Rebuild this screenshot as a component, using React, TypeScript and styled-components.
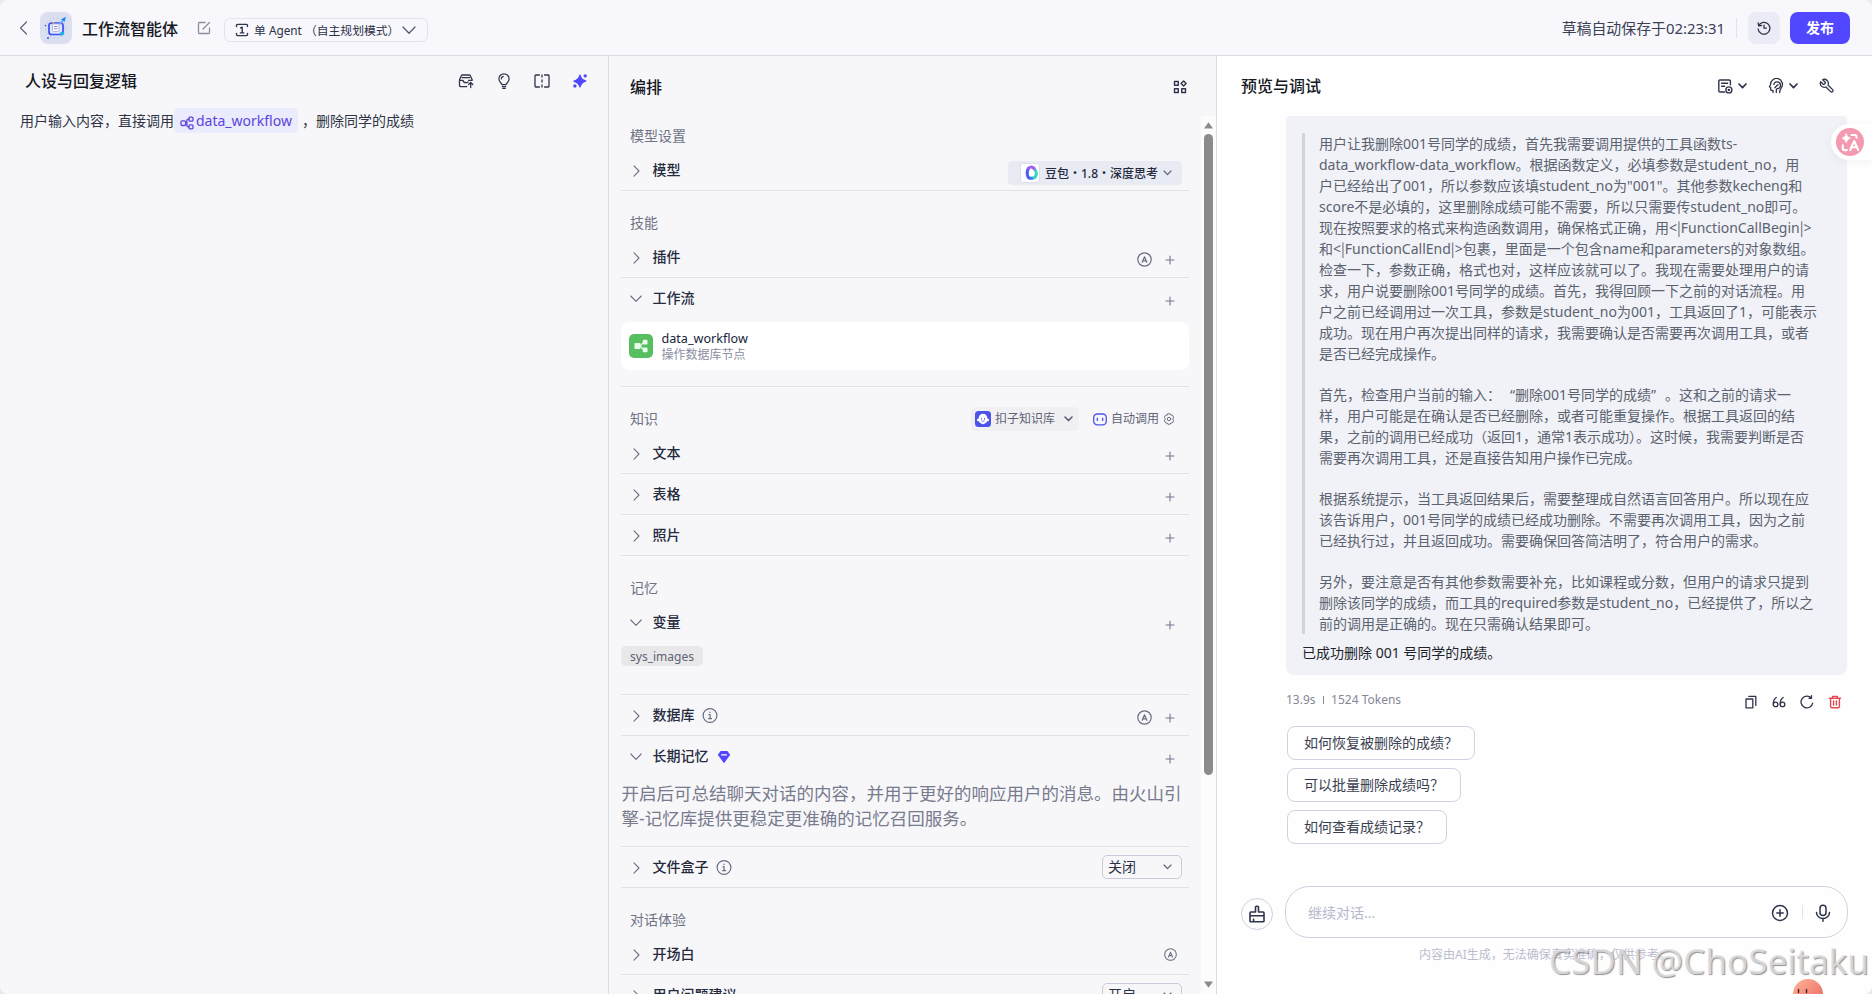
import React from "react";
import styled, { createGlobalStyle } from "styled-components";

const GlobalStyle = createGlobalStyle`
  *, *::before, *::after { box-sizing: border-box; }
  html, body { margin: 0; padding: 0; background: #e9e9ec; }
  body {
    font-family: "Noto Sans", "Noto Sans CJK SC", sans-serif;
    font-size: 14px;
    color: #2c3146;
    overflow: hidden;
  }
`;

const Page = styled.div`
  position: relative;
  width: 1872px;
  height: 994px;
  display: flex;
  flex-direction: column;
  overflow: hidden;
  background: #f7f7fa;
  border-radius: 8px;
`;

/* ---------- header ---------- */

const Header = styled.header`
  flex: none;
  height: 56px;
  padding: 0 22px 9px 17px;
  display: flex;
  align-items: flex-end;
  background: #f7f7fc;
  border-bottom: 1px solid #dcdce2;
`;

const HeaderItem = styled.div<{ $ml?: number }>`
  height: 36px;
  margin-left: ${(p) => p.$ml ?? 0}px;
  display: flex;
  align-items: center;
`;

const Avatar = styled.div`
  width: 32px;
  height: 32px;
  margin: 0 0 2px 9px;
  border-radius: 8px;
  background: #dae0ef;
  overflow: hidden;
`;

const AgentName = styled.h1`
  margin: 0 0 0 10px;
  font-size: 16px;
  line-height: 34px;
  font-weight: 500;
  color: #16181f;
`;

const ModePill = styled.div`
  width: 204px;
  height: 24px;
  margin: 0 0 4px 13px;
  padding: 0 11px 0 10px;
  display: flex;
  align-items: center;
  border: 1px solid #e4e4ea;
  border-radius: 6px;
  font-size: 11.8px;
  line-height: 22px;
  white-space: nowrap;
  color: #2c3146;
  svg:first-child { margin-right: 5px; }
  svg:last-child { margin-left: auto; }
`;

const Spacer = styled.div`
  flex: 1;
`;

const Saved = styled.span`
  margin: 0 11px 1px 0;
  font-size: 14.9px;
  line-height: 34px;
  color: #3a3f54;
`;

const VRule = styled.i<{ $h: number; $mb?: number }>`
  width: 1px;
  height: ${(p) => p.$h}px;
  margin-bottom: ${(p) => p.$mb ?? 0}px;
  background: #e2e2ea;
`;

const SquareButton = styled.button`
  width: 32px;
  height: 32px;
  margin: 0 10px 2px 11px;
  padding: 0;
  display: flex;
  align-items: center;
  justify-content: center;
  border: 0;
  border-radius: 8px;
  background: #ebebf5;
`;

const PublishButton = styled.button`
  width: 60px;
  height: 32px;
  margin: 0 0 2px;
  padding: 0;
  border: 0;
  border-radius: 8px;
  background: #5147ff;
  color: #fff;
  font: 600 14px/32px "Noto Sans", "Noto Sans CJK SC", sans-serif;
`;

/* ---------- columns ---------- */

const Columns = styled.main`
  flex: 1;
  min-height: 0;
  display: flex;
`;

const PromptColumn = styled.section`
  width: 609px;
  border-right: 1px solid #dcdce2;
  padding: 13px 20px 0;
`;

const ColumnHead = styled.div<{ $h: number; $pl?: number }>`
  height: ${(p) => p.$h}px;
  padding-left: ${(p) => p.$pl ?? 0}px;
  display: flex;
  align-items: center;
`;

const ColumnTitle = styled.h2`
  margin: 0;
  font-size: 16px;
  line-height: 24px;
  font-weight: 500;
  color: #16181f;
`;

const IconGroup = styled.div<{ $gap: number }>`
  margin-left: auto;
  display: flex;
  align-items: center;
  gap: ${(p) => p.$gap}px;
`;

const PromptText = styled.p`
  margin: 15px 0 0;
  display: flex;
  align-items: center;
  height: 25px;
  font-size: 14px;
  line-height: 25px;
  color: #2f3445;
`;

const WorkflowChip = styled.span`
  height: 25px;
  margin: 0 4px 0 0;
  padding: 0 6px 0 6px;
  display: flex;
  align-items: center;
  gap: 2px;
  border-radius: 4px;
  background: #eaebfc;
  color: #5a46dd;
  svg { margin-top: 4px; }
`;

const ArrangeColumn = styled.section`
  width: 608px;
  border-right: 1px solid #dcdce2;
  display: flex;
  flex-direction: column;
`;

const ArrangeHead = styled.div`
  flex: none;
  height: 60px;
  padding: 2px 29px 0 21px;
  display: flex;
  align-items: center;
  justify-content: space-between;
`;

const ScrollArea = styled.div`
  flex: 1;
  min-height: 0;
  display: flex;
  overflow: hidden;
`;

const SettingList = styled.div`
  flex: 1;
  padding: 0 12px;
  overflow: hidden;
`;

const ScrollTrack = styled.div`
  width: 15px;
  padding: 6px 3px 6px;
  display: flex;
  flex-direction: column;
  align-items: center;
  background: #fcfcfc;
`;

const ScrollThumb = styled.div`
  width: 9px;
  height: 641px;
  margin: 5px 0 auto;
  border-radius: 5px;
  background: #8b8b8b;
`;

const GroupHead = styled.div<{ $first?: boolean }>`
  height: ${(p) => (p.$first ? 34 : 46)}px;
  padding: ${(p) => (p.$first ? 8 : 20)}px 7px 0 9px;
  display: flex;
  align-items: flex-start;
  justify-content: space-between;
  font-size: 14px;
  line-height: 24px;
  color: #6f7385;
`;

const Row = styled.div<{ $open?: boolean }>`
  height: 41px;
  padding: 1px 7px 0 9px;
  display: flex;
  align-items: center;
  border-bottom: 1px solid ${(p) => (p.$open ? "transparent" : "#e0e1ea")};
`;

const RowArrow = styled.span`
  width: 22.5px;
  display: flex;
  align-items: center;
`;

const RowTitle = styled.span`
  padding-bottom: 2px;
  margin-right: 7.5px;
  font-size: 14px;
  line-height: 22px;
  font-weight: 500;
  color: #252a3c;
`;

const RowActions = styled.div<{ $shift?: number; $pr?: number }>`
  margin: ${(p) => p.$shift ?? 4}px 0 0 auto;
  padding-right: ${(p) => p.$pr ?? 7}px;
  display: flex;
  align-items: center;
  gap: 13.5px;
`;

const ModelPicker = styled.div`
  width: 174px;
  height: 24px;
  margin: 5px 0 0 auto;
  padding: 0 10px 0 12px;
  display: flex;
  align-items: center;
  gap: 4px;
  border-radius: 4px;
  background: #e8ebf3;
  font-size: 12px;
  font-weight: 500;
  color: #252a3c;
  svg:last-child { margin-left: auto; }
`;

const ModelLogo = styled.span`
  width: 20px;
  height: 20px;
  margin-right: 1px;
  display: flex;
  align-items: center;
  justify-content: center;
  border: 1px solid #dcdfea;
  border-radius: 3px;
  background: #fff;
`;

const ModelName = styled.span`
  white-space: nowrap;
`;

const WorkflowCard = styled.div`
  height: 48px;
  margin: 3px 0 16px;
  padding: 1px 8px 0;
  display: flex;
  align-items: center;
  gap: 8.500px;
  border-radius: 8px;
  background: #fff;
`;

const WorkflowBadge = styled.span`
  width: 24px;
  height: 24px;
  margin-top: -1px;
  display: flex;
  align-items: center;
  justify-content: center;
  border-radius: 5px;
  background: #57bf60;
`;

const WorkflowInfo = styled.div`
  display: flex;
  flex-direction: column;
  padding-top: 1px;
  font-size: 12px;
  line-height: 16px;
  strong { font-weight: 400; font-size: 12.6px; color: #20253a; }
  span { color: #8b8e9f; }
`;

const Divider = styled.div`
  height: 1px;
  background: #e0e1ea;
`;

const KnowledgeTools = styled.div`
  height: 24px;
  display: flex;
  align-items: center;
  font-size: 12px;
  color: #5f6376;
`;

const KnowledgeSource = styled.span`
  width: 108px;
  height: 24px;
  margin-right: 14px;
  padding: 0 6px 0 4px;
  display: flex;
  align-items: center;
  gap: 4px;
  border-radius: 5px;
  background: #f0f0f2;
  svg:last-child { margin-left: auto; }
`;

const AutoCall = styled.span`
  display: flex;
  align-items: center;
  gap: 4px;
  padding-right: 7px;
`;

const VariableTag = styled.div`
  width: 82px;
  height: 20px;
  margin: 3px 0 28px;
  border-radius: 5px;
  background: #e8e8ea;
  font-size: 12px;
  line-height: 22px;
  text-align: center;
  color: #5f6272;
`;

const MemoryNote = styled.p`
  margin: 4px 0 15px 0.5px;
  font-size: 17.5px;
  line-height: 25px;
  white-space: nowrap;
  color: #777b8d;
`;

const Select = styled.div`
  width: 80px;
  height: 24px;
  margin: -1px 0 0 auto;
  padding: 0 9px 0 5px;
  display: flex;
  align-items: center;
  justify-content: space-between;
  border: 1px solid #c9cbdb;
  border-radius: 5px;
  font-size: 14px;
  line-height: 22px;
  color: #2c3146;
`;

/* ---------- preview ---------- */

const PreviewColumn = styled.section`
  flex: 1;
  padding: 0 24px 0 24px;
  display: flex;
  flex-direction: column;
  background: #fefefe;
`;

const PreviewTools = styled.div`
  margin-left: auto;
  padding-right: 13px;
  display: flex;
  align-items: center;
  gap: 21px;
`;

const ToolPair = styled.span`
  display: flex;
  align-items: center;
  gap: 5px;
`;

const Bubble = styled.article`
  width: 561px;
  height: 559px;
  margin-left: 45px;
  padding: 17px 16px 0;
  border-radius: 4px 4px 8px 8px;
  background: #f1f2f7;
`;

const Reasoning = styled.blockquote`
  margin: 0;
  height: 501px;
  padding-left: 14px;
  border-left: 3px solid #d0d5dd;
  font-size: 14px;
  line-height: 21px;
  color: #5b6270;
  white-space: pre;
`;

const Paragraph = styled.p`
  margin: 0 0 20px;
`;

const WideQuote = styled.span<{ $side: "left" | "right" }>`
  display: inline-block;
  width: 14px;
  line-height: 20px;
  text-align: ${(p) => p.$side};
`;

const NarrowBar = styled.span`
  font-family: "Noto Sans CJK SC", sans-serif;
  line-height: 1;
`;

const Answer = styled.p`
  margin: 7px 0 0;
  line-height: 24px;
  color: #1d1f2a;
`;

const Meta = styled.div`
  height: 20px;
  margin: 15px 0 0 45px;
  width: 561px;
  display: flex;
  align-items: center;
  font-size: 12px;
  line-height: 20px;
  color: #858898;
`;

const MetaRule = styled.i`
  width: 1px;
  height: 8px;
  margin: 0 7px 0 7.5px;
  background: #858898;
`;

const MetaActions = styled(IconGroup)`
  margin-top: 4px;
  padding-right: 5px;
`;

const Suggestions = styled.div`
  margin: 16px 0 0 46px;
  display: flex;
  flex-direction: column;
  align-items: flex-start;
  gap: 8px;
`;

const Suggestion = styled.button`
  height: 34px;
  padding: 0 16px 1px;
  border: 1px solid #d0d2e1;
  border-radius: 8px;
  background: #fefefe;
  color: #3a3f50;
  font: 400 14px/31px "Noto Sans CJK SC", sans-serif;
`;

const Composer = styled.div`
  margin-top: 42px;
  display: flex;
  align-items: center;
  gap: 12px;
`;

const ClearButton = styled.button`
  width: 32px;
  height: 32px;
  margin-top: 4px;
  padding: 0;
  display: flex;
  align-items: center;
  justify-content: center;
  border: 1px solid #cfd1e0;
  border-radius: 50%;
  background: #fefefe;
`;

const InputBox = styled.div`
  width: 563px;
  height: 52px;
  padding: 0 16px 0 22px;
  display: flex;
  align-items: center;
  border: 1px solid #d0d1e0;
  border-radius: 24px;
  color: #b6b8cd;
`;

const InputTools = styled.div`
  margin: 2px 0 0 auto;
  display: flex;
  align-items: center;
  gap: 12.5px;
`;

const Disclaimer = styled.p`
  margin: 7px 0 0 178px;
  font-size: 12px;
  line-height: 20px;
  color: #bbbdcf;
`;

/* ---------- overlays ---------- */

const TranslateTab = styled.div`
  position: absolute;
  right: 0;
  top: 124px;
  width: 41px;
  height: 36px;
  padding-left: 5px;
  display: flex;
  align-items: center;
  border-radius: 18px 0 0 18px;
  background: rgba(255, 255, 255, 0.9);
  box-shadow: 0 2px 8px rgba(60, 60, 90, 0.06);
`;

const Mascot = styled.div`
  position: absolute;
  left: 1793px;
  top: 979px;
  width: 30px;
  height: 15px;
  overflow: hidden;
`;

const Watermark = styled.div`
  position: absolute;
  right: 3px;
  top: 936px;
  font-size: 35.1px;
  line-height: 48px;
  white-space: nowrap;
  color: rgba(226, 226, 228, 0.82);
  text-shadow: 1px 1px 1px rgba(100, 100, 105, 0.7);
`;

/* ---------- icons ---------- */

const Line = styled.svg<{ $c?: string; $w?: number }>`
  flex: none;
  display: block;
  fill: none;
  stroke: ${(p) => p.$c ?? "#2f344a"};
  stroke-width: ${(p) => p.$w ?? 1.3};
  stroke-linecap: round;
  stroke-linejoin: round;
`;

const BigChevron = ({ dir }: { dir: "right" | "down" }) => (
  <Line width="12" height="12" viewBox="0 0 12 12" $c="#6c7084" $w={1.1}>
    <path d={dir === "right" ? "M4 .8 9 6 4 11.2" : "M.8 3 6 8.4 11.2 3"} />
  </Line>
);

const SmallChevron = ({ w = 1.1, c = "#555a70" }: { w?: number; c?: string }) => (
  <Line width="9" height="6" viewBox="0 0 9 6" $c={c} $w={w}>
    <path d="M1 1l3.5 3.6L8 1" />
  </Line>
);

const Plus = () => (
  <Line width="10" height="10" viewBox="0 0 10 10" $c="#73778b" $w={1.1}>
    <path d="M5 1v8M1 5h8" />
  </Line>
);

const AutoBadge = ({ size = 15 }: { size?: number }) => (
  <Line width={size} height={size} viewBox="0 0 15 15" $c="#686c80" $w={1.2}>
    <circle cx="7.5" cy="7.5" r="6.7" />
    <path d="M5.2 10.3 7.5 4.8l2.3 5.5M6 8.8h3" />
  </Line>
);

const Info = () => (
  <Line width="16" height="16" viewBox="0 0 16 16" $c="#686c80" $w={1.2}>
    <circle cx="8" cy="7.500" r="6.900" />
    <path d="M7 6.700h1.100v3.900M6.600 10.700h2.900M8 4.100v.3" />
  </Line>
);

const Gem = () => (
  <svg width="16" height="14" viewBox="-1 0 16 14">
    <path d="M3.6 1h6.8L13.2 4.8 7.6 12.6q-.6.8-1.2 0L.8 4.8z" fill="#5147ff" />
    <path d="M4.6 4.9h4.8" stroke="#fff" strokeWidth="1.2" strokeLinecap="round" />
  </svg>
);

const AvatarArt = () => (
  <svg width="32" height="32" viewBox="0 0 32 32" fill="none">
    <circle cx="15.5" cy="16" r="10" stroke="#b9c4ee" strokeDasharray="2 2" strokeWidth=".8" />
    <rect x="9" y="11" width="14" height="11.500" rx="2.500" fill="#dfe6fb" stroke="#3d4bf0" strokeWidth="1.700" />
    <rect x="12.500" y="12" width="6.500" height="7.500" rx="1" fill="#fff" stroke="#a7b0dc" strokeWidth=".9" />
    <path d="M14 14.500h3.500M14 16.800h3.500" stroke="#7f8bd0" />
    <path d="M19.500 12l4-4" stroke="#7aa9f2" strokeWidth="2" />
    <path d="M21 7.200l5-2.400-1.200 5z" fill="#1d8df0" />
    <circle cx="22" cy="21.500" r="2" fill="#16b7e6" />
    <circle cx="8" cy="26" r="1.1" fill="#3a5cf0" />
    <circle cx="5.5" cy="13.5" r=".8" fill="#3a5cf0" />
    <circle cx="13.5" cy="10.8" r=".9" fill="#f3b54a" />
  </svg>
);

const Nodes = () => (
  <Line width="14" height="14" viewBox="0 0 14 14" $c="#5a46dd" $w={1.3}>
    <rect x="1" y="4.9" width="4.6" height="4.6" rx="1.2" />
    <rect x="9" y="1.2" width="4" height="4" rx="1" />
    <rect x="9" y="8.8" width="4" height="4" rx="1" />
    <path d="M5.6 7.2h1.3M9 3.2H8.2q-1.3 0-1.3 1.3v5q0 1.3 1.3 1.3H9" />
  </Line>
);

/* ---------- content ---------- */

interface SettingRowProps {
  title: string;
  open?: boolean;
  extra?: React.ReactNode;
  auto?: boolean;
  add?: boolean;
  select?: string;
  children?: React.ReactNode;
}

const SettingRow = ({ title, open, extra, auto, add, select, children }: SettingRowProps) => (
  <Row $open={open}>
    <RowArrow>
      <BigChevron dir={open ? "down" : "right"} />
    </RowArrow>
    <RowTitle>{title}</RowTitle>
    {extra}
    {(auto || add) && (
      <RowActions>
        {auto && <AutoBadge />}
        {add && <Plus />}
      </RowActions>
    )}
    {select && (
      <Select>
        {select}
        <SmallChevron />
      </Select>
    )}
    {children}
  </Row>
);

const reasoning: string[][] = [
  [
    "用户让我删除001号同学的成绩，首先我需要调用提供的工具函数ts-",
    "data_workflow-data_workflow。根据函数定义，必填参数是student_no，用",
    "户已经给出了001，所以参数应该填student_no为\"001\"。其他参数kecheng和",
    "score不是必填的，这里删除成绩可能不需要，所以只需要传student_no即可。",
    "现在按照要求的格式来构造函数调用，确保格式正确，用<|FunctionCallBegin|>",
    "和<|FunctionCallEnd|>包裹，里面是一个包含name和parameters的对象数组。",
    "检查一下，参数正确，格式也对，这样应该就可以了。我现在需要处理用户的请",
    "求，用户说要删除001号同学的成绩。首先，我得回顾一下之前的对话流程。用",
    "户之前已经调用过一次工具，参数是student_no为001，工具返回了1，可能表示",
    "成功。现在用户再次提出同样的请求，我需要确认是否需要再次调用工具，或者",
    "是否已经完成操作。",
  ],
  [
    "首先，检查用户当前的输入：“删除001号同学的成绩”。这和之前的请求一",
    "样，用户可能是在确认是否已经删除，或者可能重复操作。根据工具返回的结",
    "果，之前的调用已经成功（返回1，通常1表示成功）。这时候，我需要判断是否",
    "需要再次调用工具，还是直接告知用户操作已完成。",
  ],
  [
    "根据系统提示，当工具返回结果后，需要整理成自然语言回答用户。所以现在应",
    "该告诉用户，001号同学的成绩已经成功删除。不需要再次调用工具，因为之前",
    "已经执行过，并且返回成功。需要确保回答简洁明了，符合用户的需求。",
  ],
  [
    "另外，要注意是否有其他参数需要补充，比如课程或分数，但用户的请求只提到",
    "删除该同学的成绩，而工具的required参数是student_no，已经提供了，所以之",
    "前的调用是正确的。现在只需确认结果即可。",
  ],
];

const renderLine = (line: string) =>
  line.split(/([“”|])/).map((part, i) => {
    if (part === "“") return <WideQuote key={i} $side="right">{part}</WideQuote>;
    if (part === "”") return <WideQuote key={i} $side="left">{part}</WideQuote>;
    if (part === "|") return <NarrowBar key={i}>{part}</NarrowBar>;
    return part;
  });

const suggestions = ["如何恢复被删除的成绩？", "可以批量删除成绩吗？", "如何查看成绩记录？"];

export default function App() {
  return (
    <>
      <GlobalStyle />
      <Page>
        <Header>
          <HeaderItem>
            <Line width="14" height="14" viewBox="0 0 14 14" $c="#5f6376" $w={1.2}>
              <path d="M9.5 1 3.5 7l6 6" />
            </Line>
          </HeaderItem>
          <Avatar>
            <AvatarArt />
          </Avatar>
          <AgentName>工作流智能体</AgentName>
          <HeaderItem $ml={19}>
            <Line width="14" height="14" viewBox="0 0 14 14" $c="#8a8d9a" $w={1.3}>
              <path d="M8 1.5H2.5q-1 0-1 1v9q0 1 1 1h9q1 0 1-1V7M6 8l6.5-6.5" />
            </Line>
          </HeaderItem>
          <ModePill>
            <Line width="14" height="14" viewBox="0 0 14 14" $w={1.4}>
              <path d="M1.5 3.6V2.4q0-1 1-1h9q1 0 1 1v1.2M1.5 10.4v1.2q0 1 1 1h9q1 0 1-1v-1.2M5.6 4.9 7.2 4.2v5.6M5.4 9.900h3.400" />
            </Line>
            单 Agent （自主规划模式）
            <Line width="14" height="9" viewBox="0 0 14 9" $c="#555a70" $w={1.3}>
              <path d="M1 1l6 6.3L13 1" />
            </Line>
          </ModePill>
          <Spacer />
          <Saved>草稿自动保存于02:23:31</Saved>
          <VRule $h={20} $mb={8} />
          <SquareButton>
            <Line width="14" height="14" viewBox="0 0 14 14" $w={1.3}>
              <path d="M1.7 4.6A5.9 5.9 0 1 1 1.1 8M1.2 1.8l.4 3 3-.3M7 4.2v3h2.4" />
            </Line>
          </SquareButton>
          <PublishButton>发布</PublishButton>
        </Header>

        <Columns>
          <PromptColumn>
            <ColumnHead $h={24} $pl={5}>
              <ColumnTitle>人设与回复逻辑</ColumnTitle>
              <IconGroup $gap={22}>
                <Line width="16" height="16" viewBox="0 0 16 16" $w={1.3}>
                  <path d="M8.800 13.600H2.800q-1.300 0-1.300-1.300V6.800L3.200 2.900Q3.600 2 4.500 2h6.600q.9 0 1.300.900L14.200 6.800M1.600 7.300h3.200q.7 2.400 3.100 2.400 1.300 0 2.100-.7M4.200 4.700h7.300M10.600 7.300h3.600M12.700 14.500V9.600M10.600 11.500l2.100-2.100 2.100 2.100" />
                </Line>
                <Line width="16" height="16" viewBox="0 0 16 16" $w={1.2}>
                  <path d="M6 11.700C5.800 10.200 2.900 9.200 2.900 5.900a5.100 5.100 0 0 1 10.200 0c0 3.300-2.900 4.300-3.100 5.800zM6.300 13.600h3.400M6.700 15.300h2.600M5.300 5.900Q5.400 3.900 7.300 3.400" />
                </Line>
                <Line width="16" height="16" viewBox="0 0 16 16" $w={1.3}>
                  <path d="M5.400 2H1.700q-.7 0-.7.7v10.600q0 .7.7.7h3.700M10.600 2h3.700q.7 0 .7.7v10.600q0 .7-.7.7h-3.700M8 2v2M8 7v2M8 12v2" />
                </Line>
                <svg width="16" height="16" viewBox="0 0 16 16" fill="#5147ff">
                  <path
                    d="M8 2.200Q8.900 6.800 13.600 8 8.900 9.300 8 13.800 6.800 9.300 2 8.200 6.900 6.800 8 2.200z"
                    stroke="#5147ff"
                    strokeWidth="1.400"
                    strokeLinejoin="round"
                  />
                  <circle cx="13.200" cy="2.900" r="1.700" />
                  <circle cx="2.900" cy="13" r="1.700" />
                </svg>
              </IconGroup>
            </ColumnHead>
            <PromptText>
              用户输入内容，直接调用
              <WorkflowChip>
                <Nodes />
                data_workflow
              </WorkflowChip>
              ，删除同学的成绩
            </PromptText>
          </PromptColumn>

          <ArrangeColumn>
            <ArrangeHead>
              <ColumnTitle>编排</ColumnTitle>
              <Line width="14" height="14" viewBox="0 0 14 14" $w={1.4}>
                <path d="M1.500 1.500h3.800v3.800H1.500zM1.500 8.700h3.800v3.800H1.500zM8.700 8.700h3.800v3.800H8.700zM10.600.900l2.500 2.500-2.500 2.500-2.500-2.500z" />
              </Line>
            </ArrangeHead>
            <ScrollArea>
              <SettingList>
                <GroupHead $first>模型设置</GroupHead>
                <SettingRow title="模型">
                  <ModelPicker>
                    <ModelLogo>
                      <svg width="14" height="16" viewBox="0 0 14 16" fill="none" strokeWidth="3">
                        <path d="M5.500 13.300C1.800 13.500 1.200 6 3.800 3" stroke="#4b5df5" />
                        <path d="M3 4.200C5 .8 9.500 1.800 9.800 5.500" stroke="#a45cf6" />
                        <path d="M10 4.500C13 9 10.500 13.600 7 13" stroke="#35d6c4" />
                        <path d="M5 13.300q1.500.2 2.800-.4" stroke="#3f7df6" />
                      </svg>
                    </ModelLogo>
                    <ModelName>豆包・1.8・深度思考</ModelName>
                    <SmallChevron />
                  </ModelPicker>
                </SettingRow>

                <GroupHead>技能</GroupHead>
                <SettingRow title="插件" auto add />
                <SettingRow title="工作流" open add />
                <WorkflowCard>
                  <WorkflowBadge>
                    <svg width="16" height="16" viewBox="0 0 16 16" fill="#e9fbe9">
                      <rect x="1.500" y="5" width="6" height="6" rx="1" />
                      <rect x="9.800" y="1.800" width="4.700" height="4.700" rx="1" />
                      <rect x="9.800" y="9.500" width="4.700" height="4.700" rx="1" />
                      <path d="M7 8 11 4M7 8l4 4" stroke="#e9fbe9" strokeWidth="1.200" />
                    </svg>
                  </WorkflowBadge>
                  <WorkflowInfo>
                    <strong>data_workflow</strong>
                    <span>操作数据库节点</span>
                  </WorkflowInfo>
                </WorkflowCard>
                <Divider />

                <GroupHead>
                  知识
                  <KnowledgeTools>
                    <KnowledgeSource>
                      <svg width="16" height="16" viewBox="0 0 16 16">
                        <rect width="16" height="16" rx="3.500" fill="#4d53e8" />
                        <path
                          d="M8 2.800a4.300 4.300 0 0 1 4.300 4.300v.5q2 .3 1.800 1.700-.3 1.300-2 1-.7 1.800-2.300 2.100-1.800 1.500-3.600 0Q4.600 12.100 3.900 10.300q-1.700.3-2-1-.2-1.400 1.800-1.700v-.5A4.300 4.300 0 0 1 8 2.800z"
                          fill="#fff"
                        />
                        <path
                          d="M6.500 7.300v1M9.500 7.300v1M6.700 10q1.300.9 2.600 0"
                          stroke="#4d53e8"
                          fill="none"
                          strokeWidth=".8"
                          strokeLinecap="round"
                        />
                      </svg>
                      扣子知识库
                      <SmallChevron w={1.5} />
                    </KnowledgeSource>
                    <AutoCall>
                      <Line width="14" height="15" viewBox="0.5 0 14 15" $c="#4d53e8" $w={1.3}>
                        <rect x="1.200" y="2" width="12.600" height="10.800" rx="3.600" />
                        <path d="M4.800 6.200v2.200M10.200 6.200v2.200" />
                      </Line>
                      自动调用
                      <Line width="12" height="12" viewBox="0 0 12 12" $c="#6c7084" $w={1}>
                        <path d="M4.800.8h2.400l.6 1.200 1.500.1 1.300 2L10 5.300v1.400l.6 1.200-1.300 2-1.500.1-.6 1.200H4.800L4.200 10l-1.500-.1-1.300-2L2 6.700V5.300l-.6-1.200 1.300-2L4.200 2z" />
                        <circle cx="6" cy="6" r="1.700" />
                      </Line>
                    </AutoCall>
                  </KnowledgeTools>
                </GroupHead>
                <SettingRow title="文本" add />
                <SettingRow title="表格" add />
                <SettingRow title="照片" add />

                <GroupHead>记忆</GroupHead>
                <SettingRow title="变量" open add />
                <VariableTag>sys_images</VariableTag>
                <Divider />
                <SettingRow title="数据库" extra={<Info />} auto add />
                <SettingRow title="长期记忆" extra={<Gem />} open add />
                <MemoryNote>
                  开启后可总结聊天对话的内容，并用于更好的响应用户的消息。由火山引
                  <br />
                  擎-记忆库提供更稳定更准确的记忆召回服务。
                </MemoryNote>
                <Divider />
                <SettingRow title="文件盒子" extra={<Info />} select="关闭" />

                <GroupHead>对话体验</GroupHead>
                <SettingRow title="开场白">
                  <RowActions $shift={-1} $pr={5.5}>
                    <AutoBadge size={13} />
                  </RowActions>
                </SettingRow>
                <SettingRow title="用户问题建议" select="开启" />
              </SettingList>
              <ScrollTrack>
                <svg width="9" height="7" viewBox="0 0 9 7" fill="#8b8b8b">
                  <path d="M4.500.3 9 6.500H0z" />
                </svg>
                <ScrollThumb />
                <svg width="9" height="7" viewBox="0 0 9 7" fill="#8b8b8b">
                  <path d="M4.500 6.700 9 .5H0z" />
                </svg>
              </ScrollTrack>
            </ScrollArea>
          </ArrangeColumn>

          <PreviewColumn>
            <ColumnHead $h={60}>
              <ColumnTitle>预览与调试</ColumnTitle>
              <PreviewTools>
                <ToolPair>
                  <Line width="16" height="16" viewBox="0 0 16 16" $w={1.4}>
                    <path d="M7.600 14H3q-1.200 0-1.200-1.200V3.200Q1.800 2 3 2h9.200q1.200 0 1.200 1.200v3.600M4.600 5.300h6M4.600 8.300h3" />
                    <circle cx="11.900" cy="11.900" r="3" />
                    <circle cx="11.900" cy="11.900" r=".5" />
                  </Line>
                  <SmallChevron w={1.7} c="#2f344a" />
                </ToolPair>
                <ToolPair>
                  <Line width="16" height="16" viewBox="0 0 16 16" $w={1.3}>
                    <path d="M5 14.600v-2.300H3.600q-.9 0-.9-.9V9.600L1.400 8.700l1.200-2.200A5.900 5.900 0 1 1 13.300 9.800q-1.700 2-1.700 4.800" />
                    <path d="M8.300 14.600v-2.400q0-1 1-1.500a3.400 3.400 0 1 0-3.500-4.300M8.800 7.600 6.900 9.700M8.800 7.600l1.300-.8" />
                  </Line>
                  <SmallChevron w={1.7} c="#2f344a" />
                </ToolPair>
                <Line width="16" height="16" viewBox="0 0 24 24" $w={1.9}>
                  <path
                    transform="matrix(-1 0 0 1 24 0)"
                    d="M14.700 6.300a1 1 0 0 0 0 1.400l1.600 1.600a1 1 0 0 0 1.400 0l3.770-3.770a6 6 0 0 1-7.940 7.940l-6.910 6.910a2.120 2.120 0 0 1-3-3l6.910-6.910a6 6 0 0 1 7.940-7.940l-3.760 3.760z"
                  />
                </Line>
              </PreviewTools>
            </ColumnHead>

            <Bubble>
              <Reasoning>
                {reasoning.map((lines, i) => (
                  <Paragraph key={i}>
                    {lines.map((line, j) => (
                      <React.Fragment key={j}>
                        {j > 0 && <br />}
                        {renderLine(line)}
                      </React.Fragment>
                    ))}
                  </Paragraph>
                ))}
              </Reasoning>
              <Answer>已成功删除 001 号同学的成绩。</Answer>
            </Bubble>

            <Meta>
              13.9s
              <MetaRule />
              1524 Tokens
              <MetaActions $gap={14}>
                <Line width="14" height="14" viewBox="0 0 14 14" $w={1.3}>
                  <path d="M2 4h6.800v8.800H2zM4.800 1.400h7v9" />
                </Line>
                <Line width="14" height="14" viewBox="0 0 14 14" $w={1.3}>
                  <circle cx="3.600" cy="9.400" r="2.300" />
                  <circle cx="10.500" cy="9.400" r="2.300" />
                  <path d="M1.300 9.200Q1.200 4.500 4.300 2.500M8.200 9.200q-.1-4.700 3-6.700" />
                </Line>
                <Line width="14" height="14" viewBox="0 0 14 14" $w={1.3}>
                  <path d="M12.700 8.200A5.900 5.900 0 1 1 11.300 3M11.500.7v2.600H9" />
                </Line>
                <Line width="14" height="14" viewBox="0 0 14 14" $c="#e5484f" $w={1.4}>
                  <path d="M1.400 3.200h11.200M4.600 3V1.400h4.800V3M2.600 3.300v8.300q0 1.100 1.100 1.100h6.600q1.100 0 1.100-1.100V3.300M5.600 6v4M8.400 6v4" />
                </Line>
              </MetaActions>
            </Meta>

            <Suggestions>
              {suggestions.map((s) => (
                <Suggestion key={s}>{s}</Suggestion>
              ))}
            </Suggestions>

            <Composer>
              <ClearButton>
                <Line width="18" height="18" viewBox="0 0 18 18" $w={1.6}>
                  <path d="M7.500 7V2.200q0-1 1-1h1q1 0 1 1V7H15q1 0 1 1v8q0 .8-.8.8H2.800Q2 16.800 2 16V8q0-1 1-1zM2 10.700h14M5.600 16.500v-2.300" />
                </Line>
              </ClearButton>
              <InputBox>
                继续对话...
                <InputTools>
                  <Line width="18" height="18" viewBox="0 0 18 18" $w={1.5}>
                    <circle cx="9" cy="9" r="7.500" />
                    <path d="M9 5.800v6.400M5.800 9h6.400" />
                  </Line>
                  <VRule $h={14} $mb={2} />
                  <Line width="16" height="18" viewBox="0 0 16 18" $w={1.5}>
                    <rect x="5" y="1.200" width="6" height="10.400" rx="3" />
                    <path d="M1.500 8.500a6.500 6 0 0 0 13 0M8 14.700v2.500" />
                  </Line>
                </InputTools>
              </InputBox>
            </Composer>
            <Disclaimer>内容由AI生成，无法确保真实准确，仅供参考。</Disclaimer>
          </PreviewColumn>
        </Columns>

        <TranslateTab>
          <svg
            width="28"
            height="28"
            viewBox="0 0 28 28"
            fill="none"
            stroke="#fff"
            strokeWidth="2.100"
            strokeLinecap="round"
            strokeLinejoin="round"
          >
            <circle cx="14" cy="14" r="14" fill="#f49ab0" stroke="none" />
            <path
              d="M10.200 5.500q.8 3.900 4.300 4.700-3.500.8-4.300 4.700-.8-3.900-4.300-4.700 3.500-.8 4.300-4.700z"
              fill="#fff"
              strokeWidth=".6"
            />
            <path d="M15.500 7h3.300q1.700 0 1.700 1.700v1.100M6.800 17.200v3.200q0 1.700 1.700 1.700h2.300M14.200 22l4-9 4 9M15.500 19.300h5.400" />
          </svg>
        </TranslateTab>
        <Mascot>
          <svg width="30" height="30" viewBox="0 0 30 30">
            <defs>
              <linearGradient id="peach" x1="0" y1="0" x2="1" y2="1">
                <stop offset="0" stopColor="#ffb59a" />
                <stop offset="1" stopColor="#e8605a" />
              </linearGradient>
            </defs>
            <circle cx="15" cy="15" r="15" fill="url(#peach)" />
            <path d="M5.500 10.500v3M13.500 10.500v3" stroke="#40232a" strokeWidth="1.400" strokeLinecap="round" />
          </svg>
        </Mascot>
        <Watermark>CSDN @ChoSeitaku</Watermark>
      </Page>
    </>
  );
}
